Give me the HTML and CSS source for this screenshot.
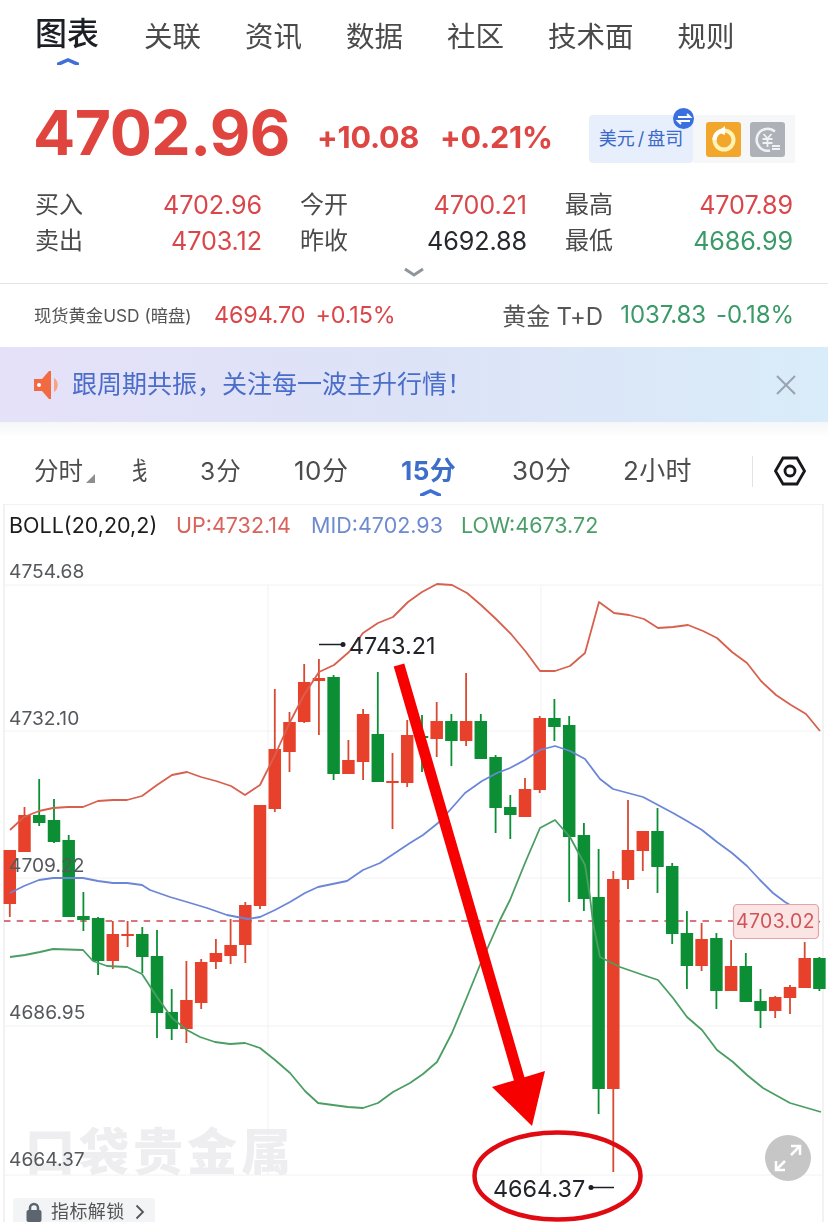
FILE: index.html
```html
<!DOCTYPE html>
<html lang="zh">
<head>
<meta charset="utf-8">
<title>图表</title>
<link rel="stylesheet" href="styles.css">
</head>
<body>
<div class="page">
  <nav class="nav">
    <a class="nav-item active">图表</a>
    <a class="nav-item">关联</a>
    <a class="nav-item">资讯</a>
    <a class="nav-item">数据</a>
    <a class="nav-item">社区</a>
    <a class="nav-item">技术面</a>
    <a class="nav-item">规则</a>
  </nav>

  <section class="quote">
    <div class="price">4702.96</div>
    <div class="change">+10.08</div>
    <div class="change pct">+0.21%</div>
    <div class="tools">
      <div class="unit">美元<i class="slash">/</i>盘司
        <span class="swap"><svg viewBox="0 0 20 20" width="20" height="20"><path class="swap-line" d="M4 8h12l-3-3M16 12H4l3 3"/></svg></span>
      </div>
      <div class="tool-group">
        <span class="tool orange"><svg viewBox="0 0 35 35" width="35" height="35"><circle class="ring-y" cx="18" cy="18" r="9.5"/><path class="arc-w" d="M18 8.5a9.5 9.5 0 0 0-9.5 9.5"/><path class="tri-w" d="M19 4v9l-8-3z"/></svg></span>
        <span class="tool grey"><svg viewBox="0 0 35 35" width="35" height="35"><path class="ring-g" d="M25 9.5a11 11 0 1 0-5 19"/><path class="yen" d="M13.500 12l4 4.500 4-4.500M12.500 17h10M12.500 21h10M17.500 17v8M22 24h8M30 27h-8"/></svg></span>
      </div>
    </div>
  </section>

  <section class="stats">
    <div class="stat"><span class="lab">买入</span><span class="val up">4702.96</span></div>
    <div class="stat"><span class="lab">今开</span><span class="val up">4700.21</span></div>
    <div class="stat"><span class="lab">最高</span><span class="val up">4707.89</span></div>
    <div class="stat"><span class="lab">卖出</span><span class="val up">4703.12</span></div>
    <div class="stat"><span class="lab">昨收</span><span class="val dark">4692.88</span></div>
    <div class="stat"><span class="lab">最低</span><span class="val down">4686.99</span></div>
  </section>
  <div class="more"><svg viewBox="0 0 22 10" width="22" height="10"><path class="more-line" d="M2 2l9 6 9-6"/></svg></div>

  <section class="related">
    <div class="rel-left">
      <span class="rel-name">现货黄金USD (暗盘)</span>
      <span class="rel-num small up">4694.70</span>
      <span class="rel-num small up">+0.15%</span>
    </div>
    <div class="rel-right">
      <span class="rel-name2">黄金 T+D</span>
      <span class="rel-num down">1037.83</span>
      <span class="rel-num down">-0.18%</span>
    </div>
  </section>

  <section class="banner">
    <svg class="horn" viewBox="0 0 28 30" width="28" height="30">
      <path class="horn-body" d="M1 9h8L16 1h2v28h-2L9 21H1z"/>
      <path class="horn-end" d="M21 8c5 3 5 11 0 14z"/>
      <circle class="horn-dot" cx="6" cy="15" r="2"/>
    </svg>
    <span class="banner-text">跟周期共振，关注每一波主升行情！</span>
    <svg class="close" viewBox="0 0 20 20" width="20" height="20"><path class="close-line" d="M1 1l18 18M19 1L1 19"/></svg>
  </section>
  <div class="fade"></div>

  <section class="periods">
    <span class="per first">分时<i class="corner"></i></span>
    <span class="per clip"><b class="clip-in">线</b></span>
    <span class="per p3">3分</span>
    <span class="per p10">10分</span>
    <span class="per p15 on">15分</span>
    <span class="per p30">30分</span>
    <span class="per p2h">2小时</span>
    <span class="sep"></span>
    <svg class="hex" viewBox="0 0 32 32" width="32" height="32"><path class="hex-line" d="M9 3h14l7.500 13L23 29H9L1.500 16z"/><circle class="hex-line" cx="16" cy="16" r="5"/></svg>
  </section>

  <section class="chart">
    <svg class="plot" viewBox="0 504 828 718" width="828" height="718">
      <rect class="frame" x="4" y="504" width="819" height="720"/>
      <path class="grid" d="M4 585H823M4 731H823M4 878H823M4 1026H823M4 1175H823M268 585V1175M541 585V1175"/>

      <text class="wm" x="25" y="1170" textLength="266">口袋贵金属</text>

      <text class="leg blk" x="9" y="533">BOLL(20,20,2)</text>
      <text class="leg l-up" x="176" y="533">UP:4732.14</text>
      <text class="leg l-mid" x="311" y="533">MID:4702.93</text>
      <text class="leg l-low" x="461" y="533">LOW:4673.72</text>

      <path class="dash" d="M4 921H735"/>

      <path class="wick-g" d="M39.200 779V826M54 799V843M68.700 835V917M83.400 892V931M98.100 917V975M142.300 927V973M157 930V1038M171.700 989V1040M333.600 675V780M377.800 672V782M422 715V772M451.400 714V766M480.800 714V759M495.600 755V833M510.300 795V839M554.400 699V741M569.200 716V902M583.900 823V911M598.600 849V1114M657.500 808V893M672.200 863V944M686.900 911V989M716.400 933V1009M745.800 953V1002M760.500 989V1028M819.400 957V991"/>
      <path class="body-g" d="M39.200 815V823M54 820V842M68.700 840V917M83.400 916V920M98.100 918V961M142.300 934V957M157 956V1013M171.700 1012V1029M333.600 677V774M377.800 734V782M422 736V738M451.400 721V741M480.800 721V759M495.600 757V808M510.300 807V815M554.400 718V727M569.200 725V837M583.900 835V899M598.600 897V1089M657.500 831V867M672.200 866V934M686.900 933V966M716.400 938V991M745.800 966V1002M760.500 1001V1011M819.400 958V989"/>
      <path class="wick-r" d="M9.800 850V917M24.500 807V852M112.800 921V969M127.600 921V947M186.400 961V1043M201.200 959V1009M215.900 939V969M230.600 919V964M245.300 902V963M260 805V909M274.800 689V812M289.500 712V772M304.200 664V723M318.900 659V735M348.400 740V774M363.100 709V780M392.500 753V829M407.200 720V787M436.700 702V757M466.100 673V746M525 778V817M539.700 716V793M613.300 871V1172M628 800V889M642.800 831V871M701.600 923V971M731.100 940V991M775.200 996V1018M790 985V1014M804.700 942V988"/>
      <path class="body-r" d="M9.800 850V904M24.500 815V852M112.800 934V961M127.600 934V936M186.400 1000V1029M201.200 962V1003M215.900 953V962M230.600 945V956M245.300 905V945M260 805V906M274.800 749V809M289.500 722V752M304.200 682V722M318.900 678V681M348.400 760V774M363.100 714V762M392.500 781V783M407.200 735V783M436.700 721V739M466.100 721V741M525 789V817M539.700 718V790M613.300 879V1089M628 850V880M642.800 831V851M701.600 939V966M731.100 966V991M775.200 997V1011M790 987V998M804.700 958V988"/>

      <polyline class="ln l-r" points="10,830 24,817 39,811 53,808 68,807 83,807 98,801 113,800 127,800 142,796 157,785 172,775 187,772 201,777 216,781 231,786 245,795 260,785 275,755 290,722 304,695 319,672 334,665 349,652 363,633 378,623 393,617 408,602 422,592 437,584 452,585 467,593 481,605 496,619 511,634 526,652 540,671 555,671 570,666 585,653 599,602 614,613 629,615 644,619 658,628 673,627 688,625 703,631 717,638 732,652 747,663 761,681 776,695 791,705 806,714 820,731"/>
      <polyline class="ln l-b" points="10,893 24,886 39,880 53,878 83,878 98,881 113,883 127,883 142,885 150,890 170,897 187,902 207,908 227,915 248,919 260,917 275,910 290,902 305,893 318,887 347,881 363,870 380,863 410,843 423,835 438,823 450,810 465,793 482,781 497,773 510,768 525,760 540,750 555,746 570,751 585,759 600,779 613,789 628,793 643,797 658,805 673,813 687,821 702,830 717,842 732,853 747,866 760,880 773,893 785,902 807,915 820,922"/>
      <polyline class="ln l-g" points="10,957 25,955 40,952 53,949 83,950 93,961 107,966 127,967 142,974 157,997 172,1018 187,1030 200,1037 215,1042 230,1044 245,1043 260,1048 275,1060 290,1073 305,1091 318,1103 348,1107 363,1108 378,1103 393,1092 410,1083 423,1074 437,1062 452,1033 467,997 480,965 500,920 510,900 525,863 540,828 555,820 570,837 585,865 590,897 593,923 600,957 620,967 643,975 658,980 673,998 687,1017 702,1030 717,1050 733,1062 747,1075 763,1088 790,1103 821,1112"/>

      <text class="axis" x="9" y="578">4754.68</text>
      <text class="axis" x="9" y="725">4732.10</text>
      <text class="axis" x="9" y="872">4709.22</text>
      <text class="axis" x="9" y="1019">4686.95</text>
      <text class="axis" x="9" y="1166">4664.37</text>

      <rect class="tag" x="733.500" y="904.500" width="85" height="34" rx="4"/>
      <text class="tag-text" x="736" y="928">4703.02</text>

      <path class="mark" d="M319 644.500H342"/>
      <circle class="mark-dot" cx="343" cy="644.500" r="2.500"/>
      <text class="mark-text" x="349" y="654">4743.21</text>
      <path class="mark" d="M591 1187.500H614"/>
      <circle class="mark-dot" cx="591" cy="1187.500" r="2.500"/>
      <text class="mark-text" x="493" y="1197">4664.37</text>

      <path class="arrow-shaft" d="M399 665L521 1085"/>
      <path class="arrow-head" d="M545 1071L532 1126L492 1087z"/>
      <ellipse class="ring" cx="557.500" cy="1176" rx="83" ry="43.500"/>
    </svg>
    <div class="expand"><svg viewBox="0 0 46 46" width="46" height="46"><path class="exp-line" d="M26 11h9v9M35 11l-9 9M20 35h-9v-9M11 35l9-9"/></svg></div>
    <div class="unlock">
      <svg class="lock" viewBox="0 0 16 20" width="16" height="20"><path class="lock-arc" d="M4 9V6a4 4 0 0 1 8 0v3"/><rect class="lock-body" x="0.500" y="8" width="15" height="12" rx="2"/></svg>
      <span class="unlock-text">指标解锁</span>
      <svg class="unlock-arrow" viewBox="0 0 10 16" width="10" height="16"><path class="unlock-line" d="M1.500 1.500L8 8l-6.500 6.500"/></svg>
    </div>
  </section>
</div>
</body>
</html>
```

FILE: styles.css
```css
* { box-sizing: border-box; }
html, body { margin: 0; padding: 0; background: #fff; }
body { font-family: Inter, "Noto Sans CJK SC", sans-serif; color: #333; overflow: hidden; }
.page { width: 828px; height: 1222px; overflow: hidden; position: relative; filter: blur(.35px); }

.nav { height: 102px; display: flex; align-items: flex-start; gap: 44px; padding: 15px 0 0 35px; }
.nav-item { position: relative; font-size: 28.500px; line-height: 44px; color: #4a4a4a; }
.nav-item.active { font-size: 32px; font-weight: 500; color: #1c1f26; margin-top: -3px; margin-right: 1px; }
.nav-item.active::after { content: ""; position: absolute; left: 22px; top: 46px; width: 22px; height: 7px; background: #3f6fd8; clip-path: polygon(50% 0, 100% 68%, 100% 100%, 82% 100%, 50% 52%, 18% 100%, 0 100%, 0 68%); }

.quote { height: 71px; display: flex; align-items: center; padding: 0 33px 0 35px; }
.price { font-size: 62.500px; font-weight: 700; color: #e0443e; line-height: 60px; width: 284px; margin: -12px 0 0 -2px; letter-spacing: -.5px; }
.change { font-size: 30.500px; font-weight: 700; color: #dd4642; margin-top: -3px; width: 123px; letter-spacing: -.2px; white-space: nowrap; }
.change.pct { width: 149px; }
.tools { display: flex; margin-top: 3px; }
.unit { position: relative; width: 104px; height: 48px; background: #e8effc; border-radius: 4px; color: #3b69c9; font-size: 18px; line-height: 48px; text-align: center; white-space: nowrap; }
.slash { font-style: normal; padding: 0 3px; }
.swap { position: absolute; right: -1px; top: -7px; width: 21px; height: 21px; border-radius: 50%; background: #3a6fe0; display: flex; align-items: center; justify-content: center; }
.swap-line { fill: none; stroke: #fff; stroke-width: 2; }
.tool-group { width: 102px; height: 48px; background: #f6f7f9; display: flex; gap: 9px; padding: 7px 0 0 13px; }
.tool { width: 35px; height: 35px; border-radius: 3px; display: block; }
.tool svg { display: block; }
.orange { background: #f2a72c; }
.grey { background: #aeb1b8; }
.ring-y { fill: none; stroke: #fff3b8; stroke-width: 4; }
.arc-w { fill: none; stroke: #fff; stroke-width: 4; }
.tri-w { fill: #fff; }
.ring-g { fill: none; stroke: #f1f2f4; stroke-width: 2.500; }
.yen { fill: none; stroke: #f1f2f4; stroke-width: 1.800; }

.stats { display: grid; grid-template-columns: 227px 227px 228px; column-gap: 38px; padding: 14px 0 0 35px; width: 828px; }
.stat { display: flex; justify-content: space-between; height: 36px; line-height: 36px; }
.lab { font-size: 24px; color: #4a4a4a; }
.val { font-size: 25.200px; letter-spacing: -.1px; }
.up { color: #d9474a; }
.down { color: #3a9a68; }
.dark { color: #26282c; }

.more { height: 25px; display: flex; justify-content: center; align-items: flex-end; padding-bottom: 6px; border-bottom: 1px solid #e4e4e4; }
.more svg { display: block; }
.more-line { fill: none; stroke: #8f959c; stroke-width: 3; }

.related { height: 63px; display: flex; align-items: center; justify-content: space-between; padding: 0 34px 2px 34px; }
.rel-left, .rel-right { display: flex; align-items: center; }
.rel-name { font-size: 17.300px; color: #555; width: 180px; white-space: nowrap; }
.rel-name2 { font-size: 24px; color: #555; width: 118px; letter-spacing: -.2px; white-space: nowrap; }
.rel-num { font-size: 24px; letter-spacing: -.1px; }
.rel-num.small { font-size: 23.300px; }
.rel-num + .rel-num { margin-left: 10px; }

.banner { height: 75px; display: flex; align-items: center; padding: 0 32px 0 33px; background: linear-gradient(90deg, #e5e1f8 0%, #dde3f7 50%, #d9ecf9 100%); }
.horn { display: block; margin-right: 11px; }
.horn-body { fill: #f16a42; }
.horn-end { fill: #f9a27f; }
.horn-dot { fill: #fff; }
.banner-text { font-size: 25px; line-height: 34px; margin-top: -2px; color: #4a6dc9; flex: 1; white-space: nowrap; }
.close { display: block; }
.close-line { stroke: #98a3ae; stroke-width: 2; fill: none; }
.fade { height: 16px; background: linear-gradient(180deg, #f5f6f8, #fff); }

.periods { height: 66px; position: relative; }
.per { position: absolute; top: 16px; font-size: 26px; line-height: 34px; color: #4d4d4d; white-space: nowrap; }
.first { left: 34px; font-size: 24.500px; }
.corner { position: absolute; left: 52px; top: 20px; width: 0; height: 0; border-left: 9px solid transparent; border-bottom: 9px solid #8d8d8d; }
.clip { left: 133px; width: 14px; overflow: hidden; font-size: 24.500px; }
.clip-in { font-weight: 400; display: block; margin-left: -10px; }
.p3 { left: 200px; letter-spacing: 1px; font-size: 24.500px; }
.p10 { left: 294px; letter-spacing: .5px; }
.p15 { left: 401px; letter-spacing: .5px; font-weight: 700; color: #3f6ec9; }
.p15::after { content: ""; position: absolute; left: 19px; top: 35px; width: 21px; height: 7px; background: #3f6fd8; clip-path: polygon(50% 0, 100% 68%, 100% 100%, 82% 100%, 50% 52%, 18% 100%, 0 100%, 0 68%); }
.p30 { left: 512px; letter-spacing: .3px; }
.p2h { left: 623px; letter-spacing: .3px; }
.sep { position: absolute; left: 752px; top: 18px; width: 1px; height: 31px; background: #e3e3e3; }
.hex { position: absolute; left: 774px; top: 17px; display: block; }
.hex-line { fill: none; stroke: #16181c; stroke-width: 2.800; }

.chart { position: relative; height: 718px; }
.plot { display: block; }
.frame { fill: none; stroke: #eeeeef; stroke-width: 1.500; }
.grid { fill: none; stroke: #f2f2f3; stroke-width: 1; }
.wm { font-family: "Noto Sans CJK SC", sans-serif; font-size: 50px; font-weight: 900; fill: #eeeef0; }
.leg { font-size: 21.500px; }
.blk { fill: #1c1c1c; }
.l-up { fill: #d9625a; }
.l-mid { fill: #6e8bd0; }
.l-low { fill: #4a9e68; }
.dash { fill: none; stroke: #d14750; stroke-width: 1.500; stroke-dasharray: 6.500 6.200; }
.wick-g { fill: none; stroke: #0c8f34; stroke-width: 1.800; }
.body-g { fill: none; stroke: #0c8f34; stroke-width: 12.500; }
.wick-r { fill: none; stroke: #d94a32; stroke-width: 1.800; }
.body-r { fill: none; stroke: #e8412b; stroke-width: 12.500; }
.ln { fill: none; stroke-width: 1.800; stroke-linejoin: round; }
.l-r { stroke: #d8604e; }
.l-b { stroke: #6b86d8; }
.l-g { stroke: #4a9e63; }
.axis { font-size: 19.200px; fill: #55585c; }
.tag { fill: #fbe4e4; stroke: #e4a3a6; stroke-width: 1.200; }
.tag-text { font-size: 19.400px; fill: #cf5459; letter-spacing: .4px; }
.mark { fill: none; stroke: #1c1f26; stroke-width: 1.500; }
.mark-dot { fill: #1c1f26; }
.mark-text { font-size: 23.400px; fill: #22242a; }
.arrow-shaft { fill: none; stroke: #f70000; stroke-width: 11; }
.arrow-head { fill: #f70000; }
.ring { fill: none; stroke: #e00a12; stroke-width: 4.500; }
.expand { position: absolute; left: 765px; top: 631px; width: 46px; height: 46px; border-radius: 50%; background: #c6c6c6; }
.expand svg { display: block; }
.exp-line { fill: none; stroke: #fff; stroke-width: 2.500; }
.unlock { position: absolute; left: 13px; top: 694px; width: 142px; height: 28px; background: #f3f4f6; border-radius: 4px 4px 0 0; display: flex; align-items: center; padding: 0 0 0 13px; }
.lock { display: block; margin-right: 9px; }
.lock-arc { fill: none; stroke: #5c6470; stroke-width: 2.500; }
.lock-body { fill: #5c6470; }
.unlock-text { font-size: 18px; letter-spacing: .4px; color: #555; line-height: 28px; white-space: nowrap; }
.unlock-arrow { display: block; margin-left: 10px; }
.unlock-line { fill: none; stroke: #555; stroke-width: 1.800; }
```
